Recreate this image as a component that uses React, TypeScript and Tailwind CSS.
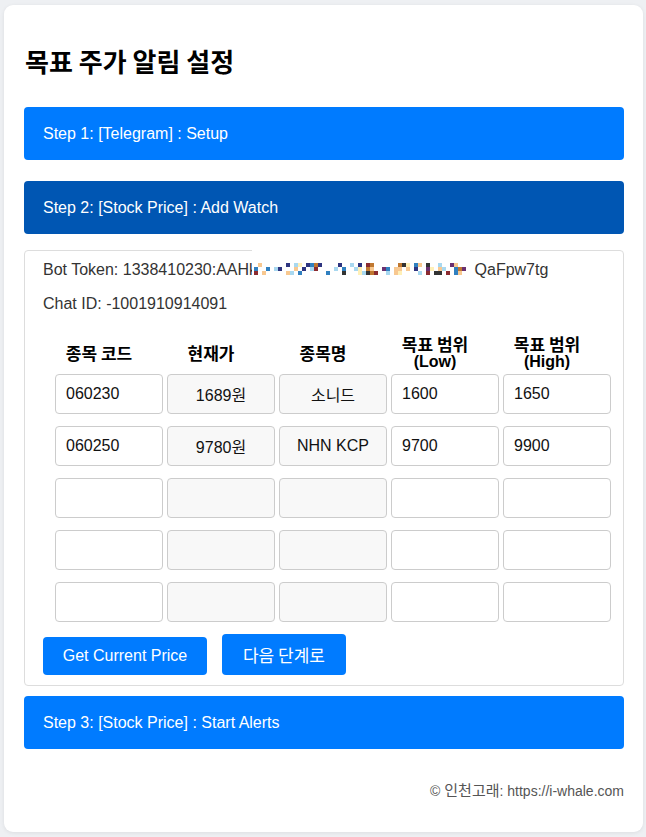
import React from 'react';

const rows = [
  { code: '060230', price: '1689원', name: '소니드', low: '1600', high: '1650' },
  { code: '060250', price: '9780원', name: 'NHN KCP', low: '9700', high: '9900' },
  { code: '', price: '', name: '', low: '', high: '' },
  { code: '', price: '', name: '', low: '', high: '' },
  { code: '', price: '', name: '', low: '', high: '' },
];

// redaction mosaic on the bot token
const palette = ['#c07830', '#2e3580', '#8b2b30', '#fff0b8', '#a8d8f0', '#f8c890', '#333333', '#3080c0', '#6a3070'];
const mosaic: { x: number; y: number; c: string }[] = [];
let seed = 7;
for (let row = 0; row < 3; row++) {
  for (let col = 0; col < 53; col++) {
    seed = (seed * 1103515245 + 12345) % 2147483648;
    const r = seed / 2147483648;
    if (r < 0.45) {
      mosaic.push({ x: col * 4, y: row * 4, c: palette[Math.floor(r * 20) % palette.length] });
    }
  }
}

const StepBar: React.FC<{ label: string; active?: boolean }> = ({ label, active }) => (
  <div
    className={`h-[53px] rounded-[4px] flex items-center px-[19px] text-white text-[16px] ${
      active ? 'bg-[#0056b3]' : 'bg-[#007bff]'
    }`}
  >
    {label}
  </div>
);

const Cell: React.FC<{ value: string; muted?: boolean }> = ({ value, muted }) => (
  <input
    readOnly
    value={value}
    className={`h-[40px] w-[108px] border border-[#ccc] rounded-[4px] px-[10px] text-[16px] text-[#111] outline-none ${
      muted ? 'bg-[#f8f8f8] text-center' : 'bg-white'
    }`}
  />
);

export default function App() {
  return (
    <div className="min-h-[837px] bg-[#eef0f3] pt-[5px] pl-[4px] font-['Liberation_Sans','Noto_Sans_CJK_KR',sans-serif]">
      <div className="w-[639px] h-[827px] bg-white rounded-[9px] shadow-[0_1px_4px_rgba(0,0,0,0.08)] pl-[20px] pr-[19px] pt-[40px] pb-[31px]">
        <h1 className="text-[26px] leading-[32px] font-bold text-black pl-[1px] font-['Noto_Sans_CJK_KR',sans-serif]">
          목표 주가 알림 설정
        </h1>

        <div className="mt-[30px]">
          <StepBar label="Step 1: [Telegram] : Setup" />
        </div>
        <div className="mt-[21px]">
          <StepBar label="Step 2: [Stock Price] : Add Watch" active />
        </div>

        <div className="mt-[16px] border border-[#ddd] rounded-[4px] pt-[8px] pb-[10px] px-[18px] text-[#333] text-[16px]">
          <div className="leading-[22px] whitespace-nowrap">
            Bot Token: 1338410230:AAHk
            <span className="relative inline-block align-top w-[218px] h-[22px] ml-[-5px] bg-white">
              <span className="absolute left-0 right-0 top-[-10px] h-[11px] bg-white" />
              <svg className="absolute left-[2px] top-[4px]" width="214" height="12" viewBox="0 0 214 12">
                {mosaic.map((m, i) => (
                  <rect key={i} x={m.x} y={m.y} width="4" height="4" fill={m.c} />
                ))}
              </svg>
            </span>
            {' '}QaFpw7tg
          </div>
          <div className="mt-[12px] leading-[22px]">Chat ID: -1001910914091</div>

          <div className="mt-[19px] ml-[12px] grid grid-cols-[repeat(5,108px)] gap-x-[4px]">
            {['종목 코드', '현재가', '종목명'].map((h) => (
              <div
                key={h}
                className="h-[37px] flex items-center justify-center pr-[20px] font-bold text-[17px] text-black font-['Noto_Sans_CJK_KR',sans-serif]"
              >
                {h}
              </div>
            ))}
            {['(Low)', '(High)'].map((h) => (
              <div
                key={h}
                className="h-[37px] flex flex-col items-center justify-center pr-[20px] font-bold text-black"
              >
                <span className="block h-[19px] leading-[19px] text-[17px] font-['Noto_Sans_CJK_KR',sans-serif]">목표 범위</span>
                <span className="block h-[18px] leading-[18px] text-[16px]">{h}</span>
              </div>
            ))}
          </div>

          <div className="mt-[3px] ml-[12px] flex flex-col gap-[12px]">
            {rows.map((r, i) => (
              <div key={i} className="flex gap-[4px]">
                <Cell value={r.code} />
                <Cell value={r.price} muted />
                <Cell value={r.name} muted />
                <Cell value={r.low} />
                <Cell value={r.high} />
              </div>
            ))}
          </div>

          <div className="mt-[12px] flex items-end gap-[15px]">
            <button className="h-[38px] w-[164px] rounded-[4px] bg-[#007bff] text-white text-[16px]">
              Get Current Price
            </button>
            <button className="h-[41px] w-[124px] rounded-[4px] bg-[#007bff] text-white text-[17px] font-['Noto_Sans_CJK_KR',sans-serif]">
              다음 단계로
            </button>
          </div>
        </div>

        <div className="mt-[10px]">
          <StepBar label="Step 3: [Stock Price] : Start Alerts" />
        </div>

        <div className="mt-[32px] text-right text-[14px] leading-[20px] text-[#555]">
          © <span className="text-[15px]">인천고래</span>: https://i-whale.com
        </div>
      </div>
    </div>
  );
}
